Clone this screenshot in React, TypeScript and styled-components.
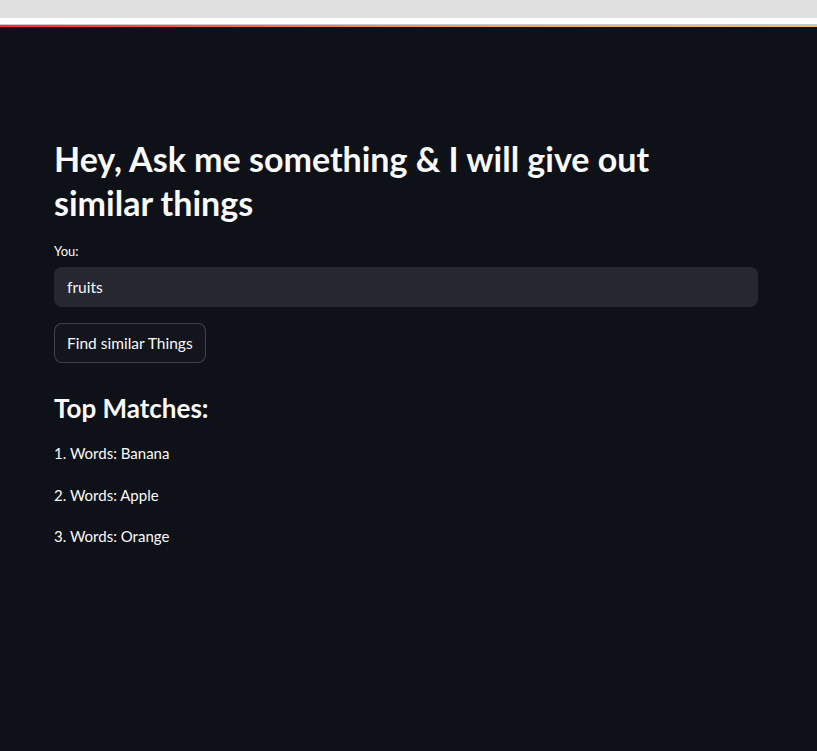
import React from "react";
import styled, { createGlobalStyle } from "styled-components";

const Global = createGlobalStyle`
  html, body { margin: 0; padding: 0; background: #0e1117; }
  body { font-family: "Lato", "Noto Sans", sans-serif; color: #fafafa; }
  * { box-sizing: border-box; }
`;

const Page = styled.div`
  min-height: 751px;
  display: flex;
  flex-direction: column;
  background: #0e1117;
`;

const BrowserStrip = styled.div`
  height: 18px;
  background: #e0e0e0;
`;

const WhiteStrip = styled.div`
  height: 7px;
  background: #ffffff;
  border-bottom: 1px solid #c9c9d0;
`;

const Decoration = styled.div`
  height: 2px;
  background: linear-gradient(90deg, #ff2b2b 0%, #f7a44a 60%, #f8c25a 100%);
`;

const Main = styled.main`
  flex: 1;
  padding: 110px 0 0 54px;
`;

const Block = styled.div`
  width: 704px;
  display: flex;
  flex-direction: column;
`;

const Title = styled.h1`
  margin: 0;
  max-width: 680px;
  font-size: 34px;
  line-height: 44px;
  font-weight: 700;
  color: #fafafa;
`;

const Label = styled.label`
  margin-top: 16px;
  font-size: 13px;
  line-height: 20px;
  color: #fafafa;
`;

const Input = styled.div`
  margin-top: 6px;
  height: 40px;
  border-radius: 8px;
  background: #262730;
  display: flex;
  align-items: center;
  padding: 0 13px;
  font-size: 15.5px;
`;

const Button = styled.button`
  align-self: flex-start;
  margin-top: 16px;
  height: 40px;
  padding: 0 12px;
  border-radius: 8px;
  border: 1px solid rgba(250, 250, 250, 0.2);
  background: #12151c;
  color: #fafafa;
  font-family: inherit;
  font-size: 15.5px;
`;

const SubTitle = styled.h3`
  margin: 27px 0 0;
  font-size: 26px;
  line-height: 36px;
  font-weight: 700;
`;

const List = styled.div`
  margin-top: 15px;
  display: flex;
  flex-direction: column;
  gap: 17.5px;
`;

const Item = styled.p`
  margin: 0;
  font-size: 15px;
  line-height: 24px;
`;

const matches = ["Banana", "Apple", "Orange"];

export default function App() {
  return (
    <Page>
      <Global />
      <BrowserStrip />
      <WhiteStrip />
      <Decoration />
      <Main>
        <Block>
          <Title>Hey, Ask me something &amp; I will give out similar things</Title>
          <Label>You:</Label>
          <Input>fruits</Input>
          <Button>Find similar Things</Button>
          <SubTitle>Top Matches:</SubTitle>
          <List>
            {matches.map((m, i) => (
              <Item key={m}>
                {i + 1}. Words: {m}
              </Item>
            ))}
          </List>
        </Block>
      </Main>
    </Page>
  );
}
